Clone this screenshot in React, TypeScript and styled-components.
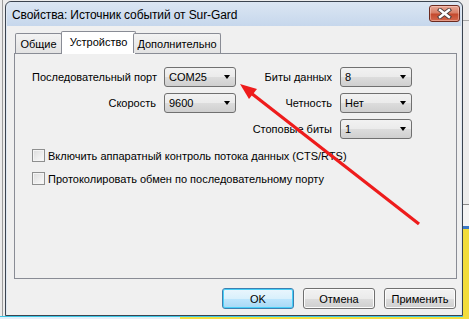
import React, { FC } from "react";
import styled, { createGlobalStyle, css } from "styled-components";

const GlobalStyle = createGlobalStyle`
  html, body {
    margin: 0;
    padding: 0;
    background: #ececec;
  }
  body {
    font-family: "Liberation Sans", Arial, sans-serif;
    font-size: 11px;
    color: #000;
  }
`;

type ComboProps = { label: string; value: string };

const Combo: FC<ComboProps> = ({ label, value }) => (
  <>
    <Label>{label}</Label>
    <Select>
      <span>{value}</span>
      <Caret />
    </Select>
  </>
);

const Check: FC<{ text: string }> = ({ text }) => (
  <CheckRow>
    <CheckBox />
    <span>{text}</span>
  </CheckRow>
);

const App: FC = () => (
  <>
    <GlobalStyle />
    <Desktop>
      <Window>
        <TitleBar>
          <Title>Свойства: Источник событий от Sur-Gard</Title>
          <CloseButton>
            <svg width="15" height="11" viewBox="0 0 15 11">
              <path
                d="M3 2 L12 9 M12 2 L3 9"
                stroke="#4a3c3c"
                strokeWidth="4.2"
                strokeLinecap="square"
              />
              <path
                d="M3 2 L12 9 M12 2 L3 9"
                stroke="#ffffff"
                strokeWidth="2.4"
                strokeLinecap="square"
              />
            </svg>
          </CloseButton>
        </TitleBar>
        <Client>
          <Tabs>
            <Tab $w={47}>Общие</Tab>
            <Tab $w={75} $active>
              Устройство
            </Tab>
            <Tab $w={88}>Дополнительно</Tab>
          </Tabs>
          <Panel>
            <Fields>
              <FieldGrid $labelW={124}>
                <Combo label="Последовательный порт" value="COM25" />
                <Combo label="Скорость" value="9600" />
              </FieldGrid>
              <FieldGrid $labelW={83}>
                <Combo label="Биты данных" value="8" />
                <Combo label="Четность" value="Нет" />
                <Combo label="Стоповые биты" value="1" />
              </FieldGrid>
            </Fields>
            <Checks>
              <Check text="Включить аппаратный контроль потока данных (CTS/RTS)" />
              <Check text="Протоколировать обмен по последовательному порту" />
            </Checks>
          </Panel>
          <ButtonBar>
            <Button $primary>OK</Button>
            <Button>Отмена</Button>
            <Button>Применить</Button>
          </ButtonBar>
        </Client>
      </Window>
      <Arrow width="469" height="319" viewBox="0 0 469 319">
        <line x1="419" y1="224" x2="251" y2="93" stroke="#ee1c1c" strokeWidth="3.2" />
        <polygon points="240,84 257,89 249,99" fill="#ee1c1c" />
      </Arrow>
    </Desktop>
  </>
);

export default App;

const Desktop = styled.div`
  position: relative;
  width: 469px;
  height: 319px;
  overflow: hidden;
  background:
    linear-gradient(to bottom, #ececec 0 20px, #a8a8a8 20px 21px, #ececec 21px 204px,
      #8a8a8a 204px 205px, #f4f4f4 205px 226px, #3a78c8 226px 229px, #f2dd3c 229px)
      right top / 6px 100% no-repeat,
    linear-gradient(to bottom, transparent 317px, #e2eff9 317px) left top / 180px 100% no-repeat,
    linear-gradient(to bottom, transparent 316px, #3cc6e6 316px 317px, #f2dd3c 317px),
    linear-gradient(to right, transparent 2px, #9c9c9c 2px 3px, transparent 3px),
    #ececec;
`;

const Window = styled.div`
  position: absolute;
  left: 5px;
  top: 1px;
  width: 458px;
  height: 315px;
  box-sizing: border-box;
  border: 1px solid #3b4450;
  border-radius: 6px 6px 0 0;
  background: #dfe8f2;
  padding: 0 1px 1px 1px;
  display: flex;
  flex-direction: column;
`;

const TitleBar = styled.div`
  height: 24px;
  flex: none;
  display: flex;
  align-items: center;
  justify-content: space-between;
  padding: 0 1px 0 5px;
  border-radius: 5px 5px 0 0;
  background: linear-gradient(#dbe6f3, #c6d7ec);
`;

const Title = styled.div`
  font-size: 12px;
  letter-spacing: -0.1px;
  color: #000;
  padding-top: 1px;
`;

const CloseButton = styled.div`
  width: 31px;
  height: 17px;
  box-sizing: border-box;
  margin-top: -1px;
  border: 1px solid #6b2a1f;
  border-radius: 3px;
  background: linear-gradient(#e9a797 0%, #d88068 45%, #c44a2e 55%, #d4694e 100%);
  box-shadow: inset 0 0 0 1px rgba(255, 220, 210, 0.45);
  display: flex;
  align-items: center;
  justify-content: center;
`;

const Client = styled.div`
  flex: 1;
  background: #f0f0f0;
  display: flex;
  flex-direction: column;
  padding: 5px 4px 6px 7px;
`;

const Tabs = styled.div`
  display: flex;
  align-items: flex-end;
  height: 22px;
  padding-left: 1px;
  position: relative;
  z-index: 1;
`;

const Tab = styled.div<{ $w: number; $active?: boolean }>`
  width: ${(p) => p.$w}px;
  height: 20px;
  box-sizing: border-box;
  border: 1px solid #898c95;
  border-bottom: none;
  border-radius: 2px 2px 0 0;
  background: linear-gradient(#f3f3f3, #e3e3e3);
  display: flex;
  align-items: center;
  justify-content: center;
  ${(p) =>
    p.$active &&
    css`
      height: 23px;
      margin: 0 -2px -1px;
      background: #fff;
      padding-bottom: 2px;
    `}
  & + & {
    margin-left: ${(p) => (p.$active ? -2 : -1)}px;
  }
`;

const Panel = styled.div`
  height: 226px;
  box-sizing: border-box;
  border: 1px solid #898c95;
  padding: 13px 0 0 17px;
`;

const Fields = styled.div`
  display: flex;
  gap: 13px;
`;

const FieldGrid = styled.div<{ $labelW: number }>`
  display: grid;
  grid-template-columns: ${(p) => p.$labelW}px 72px;
  grid-auto-rows: 20px;
  column-gap: 8px;
  row-gap: 6px;
  align-items: center;
  align-content: start;
`;

const Label = styled.span`
  text-align: right;
  white-space: nowrap;
`;

const Select = styled.div`
  height: 20px;
  box-sizing: border-box;
  border: 1px solid #707070;
  border-radius: 3px;
  background: linear-gradient(#f2f2f2 0%, #ebebeb 50%, #dddddd 50%, #cfcfcf 100%);
  display: flex;
  align-items: center;
  justify-content: space-between;
  padding: 0 5px 0 4px;
`;

const Caret = styled.span`
  width: 0;
  height: 0;
  border-left: 3.5px solid transparent;
  border-right: 3.5px solid transparent;
  border-top: 4px solid #000;
`;

const Checks = styled.div`
  display: flex;
  flex-direction: column;
  gap: 10px;
  margin-top: 10px;
`;

const CheckRow = styled.label`
  display: flex;
  align-items: center;
  gap: 3px;
  height: 13px;
`;

const CheckBox = styled.span`
  width: 13px;
  height: 13px;
  box-sizing: border-box;
  border: 1px solid #8e8f8f;
  background: linear-gradient(135deg, #dcdcdc, #fbfbfb);
  box-shadow: inset 0 0 0 1px #f4f4f4;
`;

const ButtonBar = styled.div`
  display: flex;
  justify-content: flex-end;
  gap: 9px;
  margin-top: 9px;
  padding-right: 1px;
`;

const Button = styled.div<{ $primary?: boolean }>`
  width: 72px;
  height: 21px;
  box-sizing: border-box;
  border: 1px solid #707070;
  border-radius: 3px;
  background: linear-gradient(#f2f2f2 0%, #ebebeb 50%, #dddddd 50%, #cfcfcf 100%);
  box-shadow: inset 0 0 0 1px #fcfcfc;
  display: flex;
  align-items: center;
  justify-content: center;
  ${(p) =>
    p.$primary &&
    css`
      border-color: #3c7fb1;
      background: linear-gradient(#eaf6fd 0%, #d9f0fc 50%, #bee6fd 50%, #a7d9f5 100%);
      box-shadow: inset 0 0 0 1px #48d0f8;
    `}
`;

const Arrow = styled.svg`
  position: absolute;
  left: 0;
  top: 0;
  pointer-events: none;
`;
